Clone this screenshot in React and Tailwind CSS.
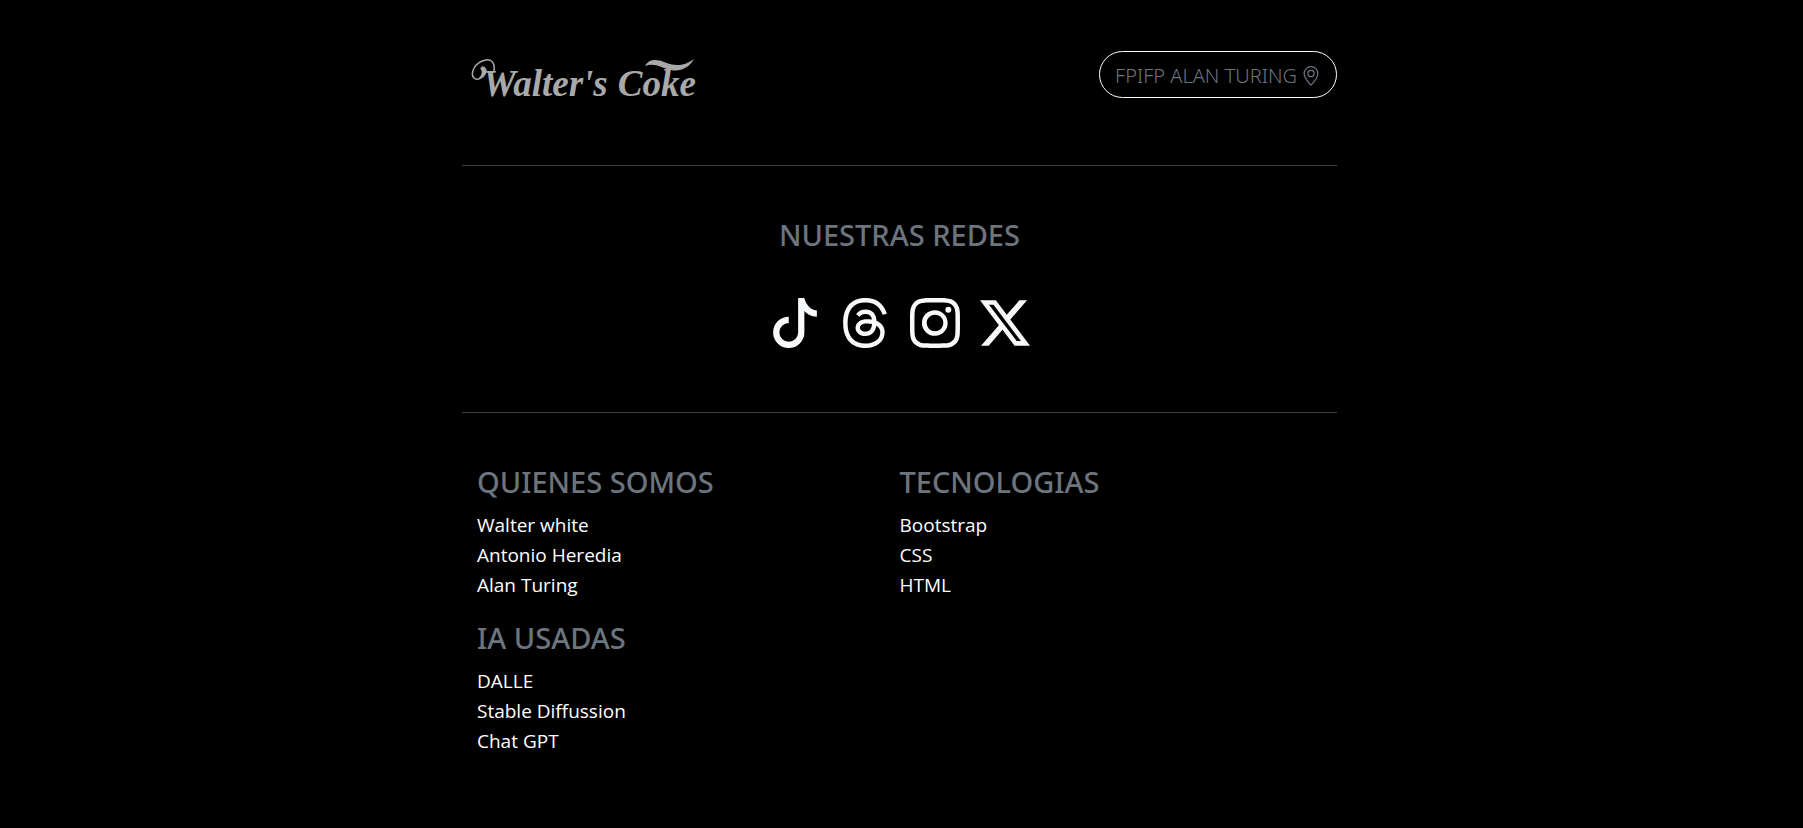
import { BsTiktok, BsThreads, BsInstagram, BsTwitterX, BsGeoAlt } from "react-icons/bs";

const socials = [
  { name: "TikTok", Icon: BsTiktok },
  { name: "Threads", Icon: BsThreads },
  { name: "Instagram", Icon: BsInstagram },
  { name: "X", Icon: BsTwitterX },
];

const sections = [
  { title: "QUIENES SOMOS", items: ["Walter white", "Antonio Heredia", "Alan Turing"] },
  { title: "TECNOLOGIAS", items: ["Bootstrap", "CSS", "HTML"] },
  { title: "IA USADAS", items: ["DALLE", "Stable Diffussion", "Chat GPT"] },
];

function Heading({ children }) {
  return <h2 className="font-['Noto_Sans',sans-serif] text-[29px] leading-9 font-medium text-[#6c757d]">{children}</h2>;
}

function Logo() {
  return (
    <a href="#" className="relative ml-[9px] flex gap-[10px] pt-3 pl-3 font-['Liberation_Serif',serif] text-[37px] leading-7 font-bold text-[#a9a9a9] italic">
      <span>Walter's</span> <span>Coke</span>
      {/* Swashes: the curl that leads into the W and the bar that sweeps over "oke" */}
      <svg viewBox="0 0 224 40" className="absolute top-0 left-0 h-10 w-56" fill="none" aria-hidden="true">
        <path d="M11 9c3 0 5 3 3 7c-2 4-8 7-11 4c-4-4 0-16 12-18c6-1 9 3 8 11" stroke="currentColor" strokeWidth="1.5" strokeLinecap="round" />
        <path d="M9 10c4-2 7 2 5 6c-1 3-4 4-7 5c4-4 5-7 2-11z" fill="currentColor" />
        <path d="M174 8c4-7 11-7 19-4c10 4 19 5 30-3c-5 9-14 13-23 11c-10-2-16-8-26-4z" fill="currentColor" />
      </svg>
    </a>
  );
}

export default function App() {
  return (
    <div className="min-h-screen bg-black pr-1 font-['Open_Sans',sans-serif] text-[19px] leading-[30px] text-white">
      <footer className="mx-auto w-full max-w-[875px] pt-[51px] pb-12">
        <div className="flex flex-wrap items-end justify-between pb-[67px]">
          <Logo />
          <a href="#" className="flex h-[47px] items-center gap-1 rounded-full border border-white px-[15px] pt-0.5 font-['Noto_Sans',sans-serif] text-xl font-light text-[#6c757d]">
            FPIFP ALAN TURING
            <BsGeoAlt className="size-5" aria-hidden="true" />
          </a>
        </div>

        <div className="flex flex-col items-center gap-[45px] border-y border-[#404040] pt-[51px] pb-16">
          <Heading>NUESTRAS REDES</Heading>
          <ul className="flex gap-5 text-[#f8f9fa]">
            {socials.map(({ name, Icon }) => (
              <li key={name}>
                <a href="#" aria-label={name}>
                  <Icon className="size-[50px]" aria-hidden="true" />
                </a>
              </li>
            ))}
          </ul>
        </div>

        <div className="grid gap-y-5 px-[15px] pt-[51px] sm:grid-cols-2">
          {sections.map(({ title, items }) => (
            <section key={title}>
              <Heading>{title}</Heading>
              <ul className="mt-[10px]">
                {items.map((item) => (
                  <li key={item}>{item}</li>
                ))}
              </ul>
            </section>
          ))}
        </div>
      </footer>
    </div>
  );
}
